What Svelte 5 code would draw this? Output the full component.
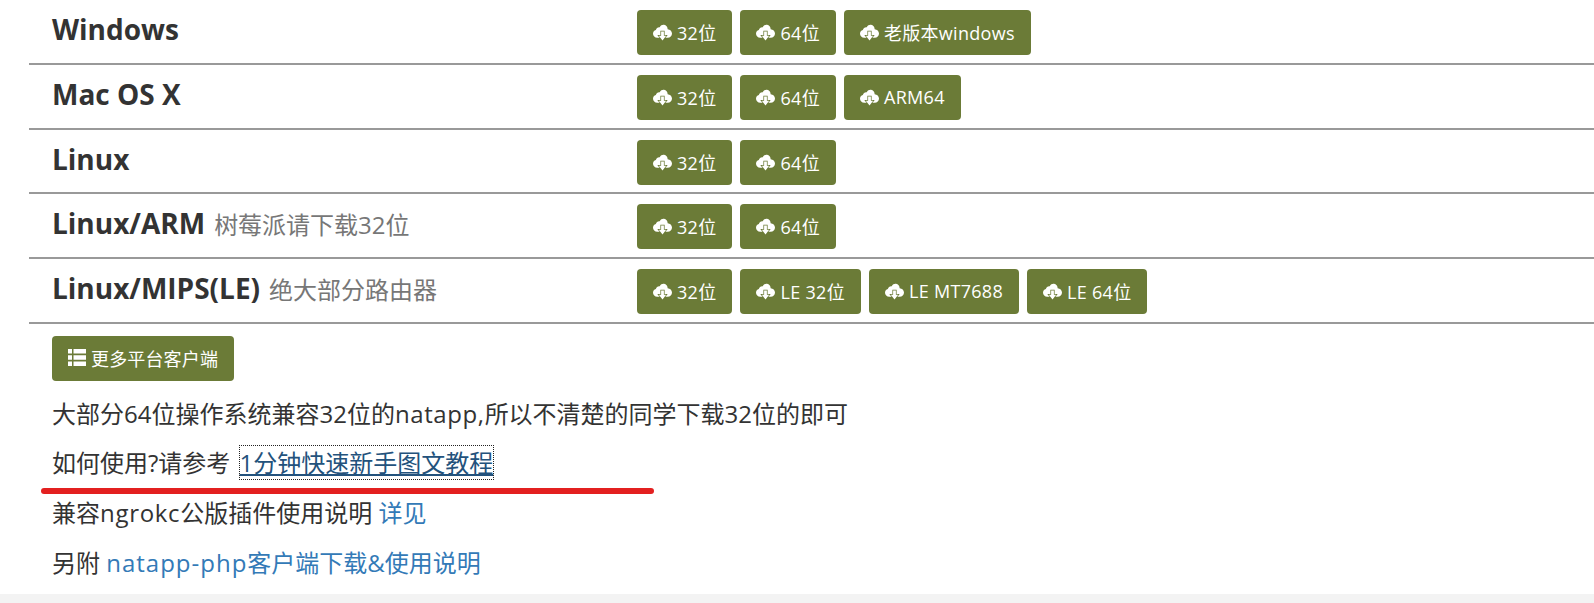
<script>
  const rows = [
    { name: 'Windows', note: '', links: ['32位', '64位', '老版本windows'] },
    { name: 'Mac OS X', note: '', links: ['32位', '64位', 'ARM64'] },
    { name: 'Linux', note: '', links: ['32位', '64位'] },
    { name: 'Linux/ARM', note: '树莓派请下载32位', links: ['32位', '64位'] },
    { name: 'Linux/MIPS(LE)', note: '绝大部分路由器', links: ['32位', 'LE 32位', 'LE MT7688', 'LE 64位'] }
  ];
</script>

<div class="page">
  <div class="table">
    {#each rows as row}
      <div class="row">
        <h3 class="name">{row.name}{#if row.note}<small>{row.note}</small>{/if}</h3>
        <div class="links">
          {#each row.links as link}
            <a class="btn" href="#dl">
              <svg class="cloud" viewBox="0 0 18 17" aria-hidden="true">
                <path d="M4 13C1.800 13 0 11.300 0 9.200c0-1.700 1.100-3.100 2.700-3.500C3.100 3.800 4.700 2.700 6.400 3 7.400 1.200 9 .5 10.500.8c2 .4 3.300 2.100 3.400 4.100 2.300.1 4.100 1.800 4.100 4.100 0 2.200-1.800 4-4.100 4H4z"/>
                <path class="cut" d="M7.700 7h2.600v4h2.200L9 15.500 5.500 11h2.200z"/>
              </svg>
              {link}
            </a>
          {/each}
        </div>
      </div>
    {/each}
  </div>

  <div class="notes">
    <a class="btn more" href="#more">
      <svg class="bars" viewBox="0 0 18 17" aria-hidden="true">
        <path d="M0 0h4v4.500H0zM0 6.250h4v4.500H0zM0 12.500h4V17H0zM5.500 0H18v4.500H5.500zM5.500 6.250H18v4.500H5.500zM5.500 12.500H18V17H5.500z"/>
      </svg>
      更多平台客户端
    </a>
    <p class="first">大部分64位操作系统兼容32位的<span class="latin">natapp,</span>所以不清楚的同学下载32位的即可</p>
    <p class="tutorial">如何使用?请参考 <a class="focused" href="#guide">1分钟快速新手图文教程</a></p>
    <p>兼容<span class="latin narrow">ngrokc</span>公版插件使用说明 <a href="#ngrokc">详见</a></p>
    <p>另附 <a href="#php"><span class="latin wide">natapp-php</span>客户端下载&amp;使用说明</a></p>
  </div>
  <div class="marker"></div>
</div>
<div class="footer"></div>

<style>
  :global(body) {
    margin: 0;
    background: #f3f3f3;
  }

  .page {
    position: relative;
    background: #fff;
    height: 594px;
    padding-left: 29px;
    box-sizing: border-box;
    font-family: "Open Sans", "Noto Sans CJK SC", sans-serif;
    color: #333;
    overflow: hidden;
  }

  .row {
    display: flex;
    height: 64.75px;
    box-sizing: border-box;
    border-bottom: 2px solid #999;
  }

  .name {
    width: 608px;
    padding-left: 23px;
    margin: 0;
    box-sizing: border-box;
    font-size: 28px;
    font-weight: 700;
    line-height: 59px;
    white-space: nowrap;
  }

  .name small {
    margin-left: 9px;
    font-size: 24px;
    font-weight: 400;
    color: #777;
  }

  .links {
    display: flex;
    gap: 8px;
    padding-top: 10px;
  }

  .btn {
    display: inline-flex;
    align-items: center;
    height: 45px;
    padding: 0 16px 1px;
    box-sizing: border-box;
    background: #6b7b37;
    border-radius: 4px;
    color: #fff;
    font-size: 18px;
    letter-spacing: 0.3px;
    text-decoration: none;
    white-space: nowrap;
  }

  .btn.more {
    letter-spacing: 0.15px;
  }

  .cloud, .bars {
    width: 18px;
    height: 17px;
    margin-right: 5px;
    fill: #fff;
    flex: none;
  }

  .cloud {
    width: 19px;
    height: 18px;
    margin-top: 2px;
  }

  .cloud .cut {
    stroke: #6b7b37;
    stroke-width: 1.4px;
    paint-order: stroke;
  }

  .notes {
    padding: 12px 0 0 23px;
  }

  .notes p {
    margin: 13.7px 0 0;
    font-size: 24px;
    line-height: 36px;
  }

  .notes p.first {
    margin-top: 15px;
  }

  .notes p.tutorial {
    word-spacing: 3px;
  }

  .latin {
    letter-spacing: 0.6px;
  }

  .latin.narrow {
    letter-spacing: 0.7px;
  }

  .latin.wide {
    letter-spacing: 1px;
  }

  .notes a:not(.btn) {
    color: #337ab7;
    text-decoration: none;
  }

  .notes a.focused {
    color: #23527c;
    text-decoration: underline;
    outline: 1px dotted #222;
  }

  .marker {
    position: absolute;
    left: 41px;
    top: 488px;
    width: 613px;
    height: 6px;
    border-radius: 3px;
    background: #e32020;
  }

  .footer {
    height: 9px;
  }
</style>
